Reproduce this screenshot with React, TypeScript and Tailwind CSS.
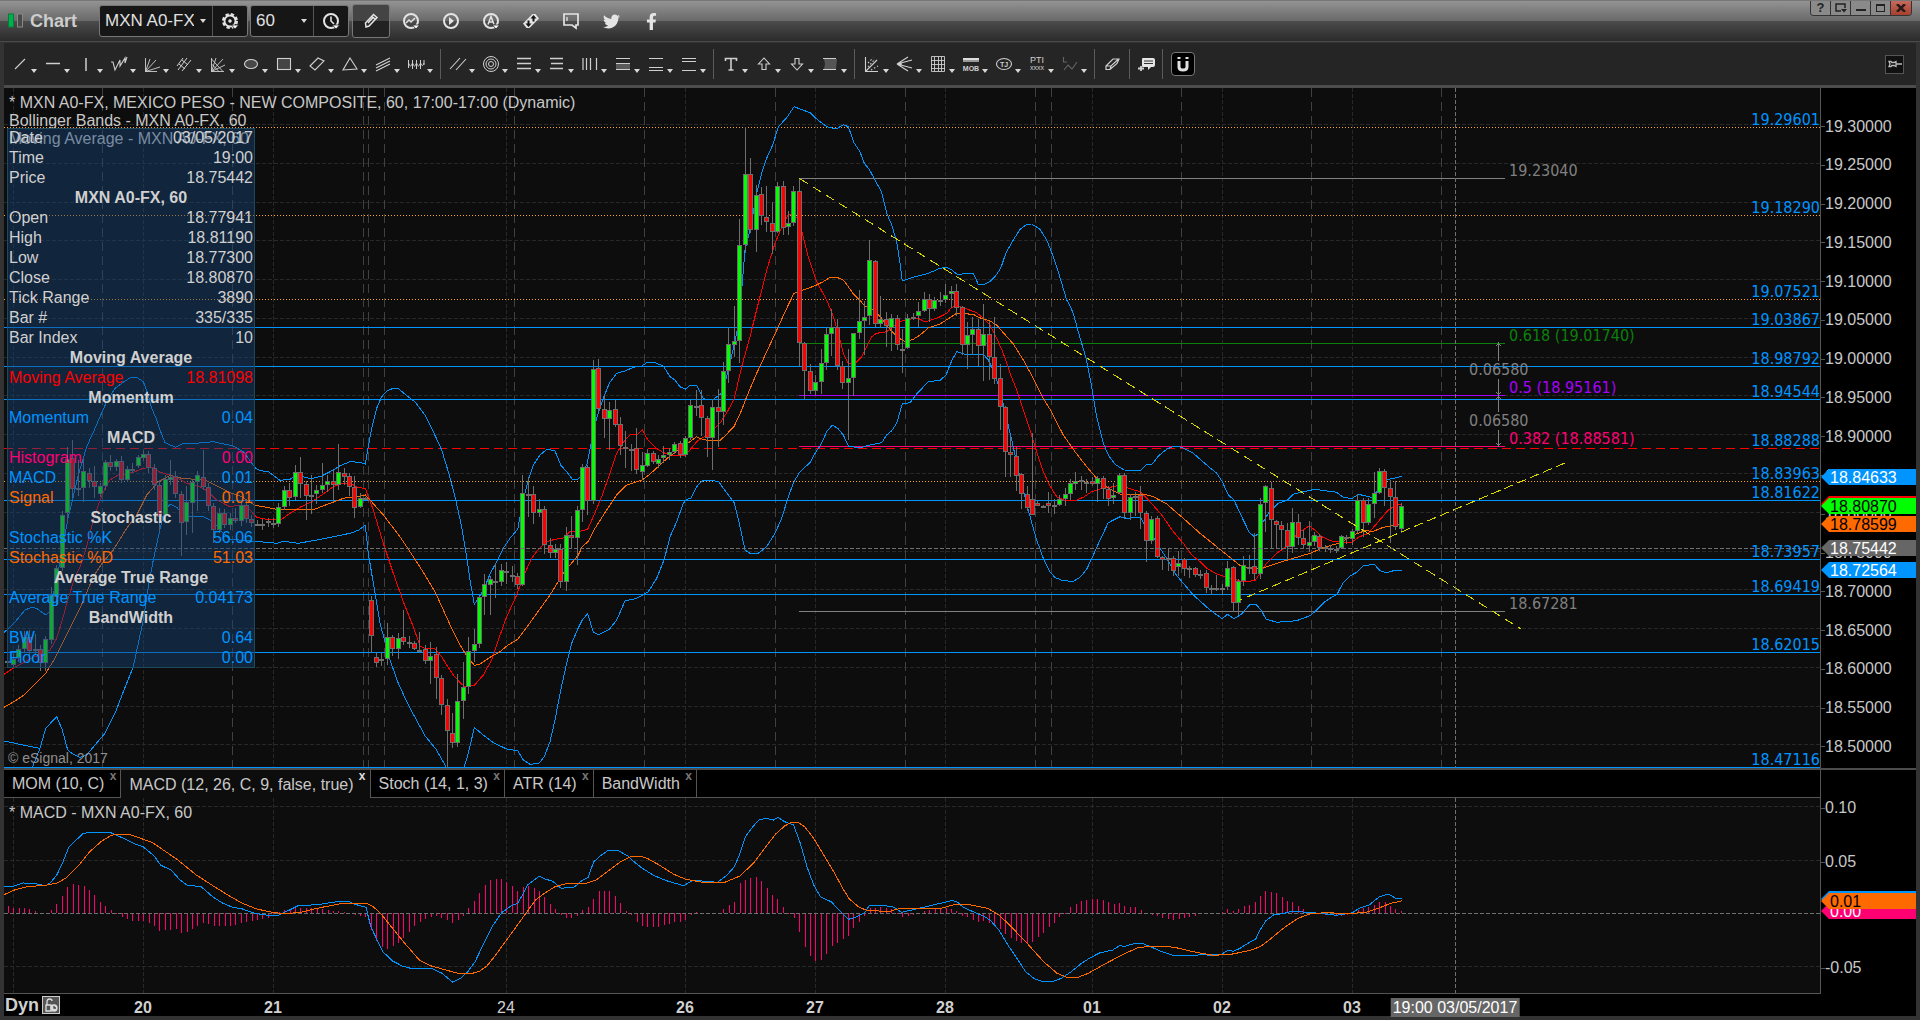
import React from 'react';
import { FaTwitter, FaFacebookF } from 'react-icons/fa';

type Point = [number, number];

type Chunk = { ox: number; oy: number; sx?: number; data: string };

const PLOT = { x: 4, y: 88, w: 1816, h: 680 };
const MACD = { x: 4, y: 798, w: 1816, h: 196 };
const BAR_STEP = 1030 / 190;

const priceY = (price: number) => 124.5 + (19.3 - price) * 775.6;

const toPoints = (chunks: Chunk[]): Point[] =>
  chunks.flatMap(({ ox, oy, sx = 3, data }) =>
    data.trim().split(/\s+/).map((pair): Point => {
      const [x, y] = pair.split(',').map(Number);
      return [ox + x / sx, oy + y / 3];
    })
  );

const toPolyline = (chunks: Chunk[]) =>
  toPoints(chunks).map(([x, y]) => `${x.toFixed(1)},${y.toFixed(1)}`).join(' ');

const upperBand: Chunk[] = [
  { ox: 0, oy: 420, data: '12,637 30,622 50,600 75,570 95,562 110,565 137,585 148,575 165,500 185,400 205,290 215,250 235,165 260,80 283,30 300,-10 320,-55 345,-95 375,-117 395,-129 412,-127 430,-115 445,-75 455,-35 470,0 480,30 495,68 527,82 550,70 575,71 640,65 700,78 730,95 745,115 765,143 780,152 805,155 840,181 870,178 890,165 915,172 935,176 965,168 1000,150 1020,137' },
  { ox: 350, oy: 340, data: '0,365 30,367 46,372 55,320 65,265 80,205 95,170 110,153 130,145 147,147 170,167 195,185 225,225 250,275 275,330 295,395 315,470 335,560 350,650 360,720 373,793 388,770 403,745 421,700 440,665 460,625 480,595 503,568 520,480 535,420 550,375 570,345 592,327 615,333 632,375 650,395 667,418 683,418 697,405 712,370 725,300 740,235 760,175 778,130 800,100 825,93 850,82 875,78 890,68 915,68 940,78 960,110 975,120 990,140 1006,148 1020,136 1040,137' },
  { ox: 700, oy: 90, data: '10,925 20,930 40,928 62,912 75,880 90,820 110,730 125,600 135,480 150,420 170,310 185,250 200,205 218,165 235,110 260,83 282,50 330,68 350,87 380,110 400,115 413,114 430,104 445,110 462,158 480,185 493,220 508,238 525,270 545,307 560,370 575,405 590,455 600,520 607,573 640,562 685,550 720,535 740,532 755,540 772,553 820,550 835,583 852,583 870,575 885,560 902,535 918,488 940,450 960,418 980,403 995,402 1020,418 1040,450 1055,488 1070,530 1085,580 1100,630' },
  { ox: 1050, oy: 300, data: '52,0 70,40 85,95 108,175 125,260 140,350 160,430 175,465 195,493 222,510 272,511 290,493 307,492 325,468 350,448 372,438 395,442 430,460 470,495 500,520 517,545 535,585 552,600 575,650 598,697 612,709 625,702 640,665 655,640 685,610 712,600 730,583 760,575 795,568 860,577 880,592 905,596 925,583 965,592 985,570 1000,545 1015,538 1035,534 1055,529' },
];

const lowerBand: Chunk[] = [
  { ox: 0, oy: 420, data: '97,1043 120,985 137,925 170,890 187,930 203,990 220,1003 240,1012 260,1005 285,975 315,940 345,880 370,815 400,740 415,670 430,600 445,500 460,420 475,350 490,285 510,252 530,262 545,280 565,290 610,290 640,305 660,330 690,358 765,364 830,370 850,364 895,370 950,360 1000,350' },
  { ox: 350, oy: 340, data: '0,580 25,571 46,556 55,640 75,760 90,850 105,905 120,960 145,1030 175,1095 225,1187 258,1228 288,1280 310,1320 335,1320 343,1280 355,1240 373,1163 400,1185 430,1208 470,1227 503,1232 520,1260 540,1273 567,1270 583,1250 600,1205 615,1140 632,1050 650,970 665,910 682,870 697,840 713,821 730,877 745,884 778,868 800,840 825,783 860,775 895,755 920,715 943,658 960,590 980,545 1000,490 1010,478 1022,475 1040,440' },
  { ox: 700, oy: 90, data: '5,1174 15,1170 55,1174 85,1215 103,1238 118,1300 135,1380 150,1390 175,1390 200,1370 225,1330 245,1285 265,1220 282,1175 300,1145 330,1118 348,1085 362,1065 380,1025 397,1005 413,1015 430,1035 445,1068 478,1074 510,1065 545,1058 560,1035 575,1022 590,1000 607,942 630,938 650,912 685,875 720,871 738,855 755,812 770,785 800,795 850,793 865,810 880,840 900,900 915,965 935,1050 955,1140 970,1200 985,1260' },
  { ox: 1050, oy: 300, data: '-57,660 -40,720 -20,775 0,815 15,833 40,842 70,844 90,832 110,808 130,765 150,720 175,668 210,650 230,655 272,652 290,690 310,710 330,745 350,775 375,820 400,850 430,885 480,930 517,956 532,943 552,956 575,942 598,915 618,913 633,930 648,957 680,967 740,962 780,947 800,930 825,905 845,892 862,882 878,850 900,828 922,816 940,797 973,793 990,812 1010,818 1035,811 1055,811' },
];

const fastAverage: Chunk[] = [
  { ox: 0, oy: 420, data: '12,763 40,745 75,725 100,712 120,705 150,690 170,655 187,600 203,540 222,480 240,440 260,380 280,300 300,240 315,205 330,180 355,165 375,163 400,157 430,145 460,142 480,157 510,165 540,178 560,190 600,200 625,215 650,240 690,260 720,255 745,265 770,292 800,298 845,298 870,280 900,262 935,245 970,222 1000,200 1030,190 1055,192 1075,203' },
  { ox: 350, oy: 340, data: '46,445 70,510 100,610 130,700 160,785 190,860 210,918 225,926 255,927 275,950 290,975 310,1005 330,1028 345,1040 373,1036 400,1005 425,960 445,900 470,830 500,765 520,710 545,655 565,628 590,605 615,598 640,594 660,575 685,575 713,568 730,530 755,470 780,400 800,340 825,300 840,285 865,282 877,270 890,295 915,322 940,338 965,345 1000,348 1020,330 1040,305' },
  { ox: 700, oy: 90, data: '0,1048 30,1030 60,1000 85,960 103,925 125,830 150,740 175,640 200,540 225,460 250,400 265,375 282,372 295,390 307,430 325,500 350,575 380,630 400,680 415,730 430,790 445,820 465,820 485,800 500,770 515,740 530,730 560,725 580,710 600,695 625,688 655,685 675,696 715,683 740,670 755,652 770,647 800,657 830,668 850,685 870,705 890,745 910,790 930,850 950,900 970,960 990,1020 1010,1085 1030,1145' },
  { ox: 1050, oy: 300, data: '0,558 20,590 45,602 75,602 100,592 125,575 150,567 190,560 205,556 240,566 270,575 300,605 335,645 370,695 400,730 425,765 450,785 470,805 500,822 525,830 555,838 575,845 615,842 630,820 650,790 680,760 712,738 730,715 750,695 778,678 795,690 815,710 850,725 905,727 925,712 955,700 985,665 1015,630 1035,618 1055,612' },
];

const slowAverage: Chunk[] = [
  { ox: 0, oy: 420, data: '12,862 45,843 75,823 100,798 137,760 165,715 200,645 240,565 280,470 310,425 340,390 380,325 410,285 440,225 475,185 510,166 545,175 615,180 650,198 690,218 725,230 765,256 800,262 840,270 895,267 945,267 990,250 1030,235' },
  { ox: 350, oy: 340, data: '0,472 20,470 46,465 60,480 100,525 150,590 190,650 225,705 255,755 280,810 305,865 325,905 345,940 373,976 390,972 420,952 450,935 470,918 503,898 540,848 600,765 640,700 685,645 697,620 715,604 735,565 770,510 800,465 830,435 877,420 900,402 930,375 955,352 975,338 1000,320 1020,305 1040,290' },
  { ox: 700, oy: 90, data: '0,1045 20,1051 60,1051 75,1038 103,1008 125,960 140,920 170,850 200,785 235,710 260,655 282,610 310,600 345,587 370,575 390,562 410,562 430,570 445,590 460,612 475,626 495,648 520,660 545,685 565,712 590,740 615,755 640,748 660,735 685,714 720,702 750,683 770,670 820,673 835,682 870,693 890,705 910,728 940,762 970,810 1000,865 1030,925' },
  { ox: 1050, oy: 300, data: '0,328 40,405 75,455 110,500 142,537 175,565 210,582 280,582 310,590 350,612 400,655 450,700 500,740 550,780 575,800 612,808 640,804 680,790 730,775 780,760 820,743 870,728 910,705 945,692 970,694 1000,682 1030,676 1055,670' },
];

// g = up, r = down, d = unchanged; then x, high, body top, body bottom, low
const candleChunks: Chunk[] = [
  { ox: 0, oy: 420, data: `d22,715,725,725,745 g40,700,717,732,742 g55,675,687,712,728 g73,635,653,685,700 r88,630,651,691,710
    d106,642,688,688,705 r121,675,688,727,755 g136,650,657,727,755 g154,503,525,657,672 g169,435,445,530,560 g187,275,287,443,455
    g202,83,118,277,310 r217,60,115,206,235 d235,122,206,206,228 g250,115,154,203,247 r268,145,160,182,205 r283,140,184,199,235
    g300,190,199,220,232 g316,120,128,196,210 r331,105,128,140,155 g349,118,125,140,155 r364,110,124,178,190 g382,140,148,178,188
    d397,130,148,148,160 g415,105,112,136,145 g430,90,103,112,125 r445,95,102,142,160 r463,133,145,193,210 r478,180,196,290,335
    g496,165,178,284,305 g511,122,172,176,195 r526,155,170,220,235 r544,215,223,306,410 g559,200,247,304,345 g577,180,187,247,340
    g592,155,166,185,275 r610,92,172,200,210 r625,190,202,257,275 r640,250,259,328,370 g658,265,280,328,340 r673,268,280,312,325
    g691,280,295,312,330 r706,265,295,301,310 g724,245,256,302,320 r739,240,256,295,310 r754,285,298,307,322 d772,300,312,312,320
    d787,298,312,312,332 d805,295,304,304,322 d820,295,311,311,325 g835,250,262,310,322 g853,200,211,259,270 r868,190,211,232,258
    g886,137,157,229,240 r901,113,157,190,235 r919,185,192,226,302 d935,165,227,227,282 g949,195,211,221,252 g967,130,196,208,220
    g982,165,184,193,218 r1000,150,184,192,247 g1015,72,157,192,212 r1033,145,160,170,195 r1048,160,169,200,230
    r1063,170,202,262,295 g1081,220,235,260,265 d1096,232,234,234,236` },
  { ox: 350, oy: 340, data: `r64,770,781,886,940 r79,940,952,967,983 d94,938,957,957,980 g112,850,892,955,977 r127,885,892,925,950
    g145,880,895,925,957 r160,810,892,905,915 d178,888,908,908,925 r193,903,910,925,932 d208,877,930,930,935 r226,915,928,961,972
    g241,907,949,961,1033 r259,922,943,1012,1077 r274,1007,1015,1093,1125 r292,1077,1096,1171,1285 r307,1119,1180,1207,1225
    g322,1003,1084,1207,1222 g340,967,1042,1081,1137 g355,892,934,1039,1062 g373,868,913,931,967 g388,768,772,911,925
    g403,702,733,769,825 g421,710,718,733,825 d436,670,723,723,775 g454,673,691,724,740 d469,668,693,693,732 d487,680,705,705,727
    r502,700,709,734,748 g517,405,460,734,738 d535,412,462,462,532 r550,438,463,517,552 g568,478,508,517,532 r583,500,508,613,642
    r601,595,616,637,655 g616,612,628,637,655 r631,612,628,724,745 g649,562,586,724,755 r664,530,586,592,625 g682,500,511,592,675
    g697,372,382,508,547 r712,375,382,481,525 g730,60,88,481,492 r745,57,85,205,217 r763,165,208,235,295 g778,188,211,235,332
    r796,182,208,253,262 r811,232,253,316,345 d826,275,321,321,385 d844,312,327,327,393 r859,264,325,388,402 g877,338,376,395,420
    g892,327,340,376,382 r910,333,340,364,372 g925,345,358,370,385 g940,318,346,352,370 g958,325,337,343,360 g973,306,313,334,342
    r991,305,310,343,355 g1006,288,295,343,352 g1021,180,196,292,300 d1039,152,198,198,230 r1054,150,196,232,290
    r1072,230,235,292,353 g1087,177,202,292,392 r1105,148,202,214,323 g1120,67,94,214,255` },
  { ox: 700, oy: 90, data: `g85,712,763,842,880 g103,648,754,763,802 g118,388,466,752,820 g136,112,253,463,490 r151,204,253,418,430
    g169,285,316,418,487 r184,292,313,376,405 r199,288,382,395,427 r217,337,400,424,492 g232,276,289,424,430 r250,273,289,412,437
    g265,363,400,409,437 g280,288,304,397,410 r298,264,304,757,828 r313,756,760,842,928 r331,822,844,902,912 g346,857,877,901,915
    g364,777,820,875,912 g379,715,733,817,840 g394,657,712,730,800 r412,687,712,827,842 r427,813,829,878,897 g445,777,865,878,1050
    g460,730,730,862,920 g478,600,694,728,748 g493,633,682,692,795 g508,450,511,677,705 r526,510,514,700,712 g541,618,688,700,715
    r559,667,688,707,773 g574,672,685,712,785 r592,675,685,763,780 d607,718,777,777,850 g622,672,685,773,777 d640,670,681,681,692
    g655,637,664,676,712 g673,608,628,661,667 r688,613,628,656,697 g703,622,631,655,665 d721,608,632,632,650 g736,582,616,628,640
    g754,588,604,611,655 r769,582,604,653,680 r787,648,652,763,797 g802,697,736,763,837 g817,682,718,733,795 r835,687,718,766,828
    g850,642,733,766,875 r868,693,733,799,870 r883,682,802,865,883 r901,822,865,949,1020 r916,948,952,1084,1163
    r931,1043,1087,1093,1163 r949,1072,1099,1157,1203 r964,1150,1153,1210,1258 r982,1190,1213,1252,1265 r997,1030,1228,1273,1275
    r1012,1235,1240,1246,1250 d1030,1245,1248,1248,1251 r1045,1207,1240,1246,1270 d1063,1228,1246,1246,1272
    g1078,1215,1228,1243,1250 g1096,1195,1213,1225,1250 g1111,1168,1180,1210,1230 g1126,1147,1174,1180,1200
    d1144,1160,1172,1172,1200 d1159,1167,1176,1176,1210 r1177,1162,1174,1180,1190` },
  { ox: 1050, oy: 300, data: `g142,530,535,550,607 r160,530,535,565,597 r175,560,568,596,620 g190,550,586,592,613 g208,520,526,577,583
    r223,520,526,637,658 g241,582,592,637,660 d256,578,588,588,650 r271,558,586,637,687 r289,635,640,721,787 g304,650,658,721,733
    r322,650,655,769,775 r337,768,772,778,812 d355,745,775,775,815 r370,768,775,811,828 g385,755,790,799,828 r403,775,778,805,830
    d418,800,806,806,835 r436,802,805,823,833 d451,812,822,822,838 r469,812,820,862,880 d484,855,864,864,885 d499,825,864,864,875
    d517,852,864,864,885 g532,785,805,859,870 r550,798,802,907,937 g565,838,844,907,945 g580,770,796,841,860 d598,765,801,801,822
    r613,700,799,820,840 g631,595,613,820,838 g646,555,559,607,697 r664,547,565,658,745 r679,660,664,674,745 r694,665,676,688,752
    r712,670,691,739,780 g727,625,667,739,760 r745,643,667,712,737 r760,690,715,733,745 g778,663,727,737,757 g793,697,706,724,738
    r808,703,709,742,755 d826,735,743,743,757 d841,735,744,744,760 d859,740,748,748,760 g874,705,709,743,748 d889,707,713,713,733
    g907,688,694,716,735 g922,583,601,691,700 r940,595,601,667,712 g955,595,613,667,675 g973,517,580,610,655 g988,505,514,577,583
    r1003,507,514,562,620 r1021,540,565,590,730 r1036,545,592,679,690 g1054,609,619,685,700` },
];

const candles = candleChunks.flatMap(({ ox, oy, data }) =>
  data.trim().split(/\s+/).map((token) => {
    const [x, high, top, bottom, low] = token.slice(1).split(',').map(Number);
    const py = (v: number) => oy + Math.floor(v / 3);
    return { kind: token[0], x: ox + Math.floor(x / 3), high: py(high), top: py(top), bottom: py(bottom), low: py(low) };
  })
);

const macdLine: Chunk[] = [
  { ox: 0, oy: 760, sx: 2.063, data: '8,380 27,379 48,369 70,370 95,378 105,367 118,343 130,305 142,262 155,243 172,220 190,217 230,219 250,232 275,250 295,260 318,288 332,316 353,330 370,358 385,375 415,380 440,412 460,430 480,442 500,447 525,460 545,464 560,467 575,465 590,455 615,437 655,434 700,424 720,425 735,434 755,442 765,500 778,540 790,575 810,603 830,618 850,626 892,626 912,640 934,667 950,655 965,635 980,605 1000,545 1015,500 1035,458 1055,437 1068,430 1078,405 1088,375 1112,349 1125,357 1140,364 1158,385 1185,381 1200,362 1213,353 1225,305 1240,286 1255,271 1275,271 1295,288 1308,305 1325,325 1350,347 1375,362 1410,377 1430,361 1455,364 1480,367 1500,345 1515,320' },
  { ox: 740, oy: 800, sx: 2.24, data: '0,160 12,110 30,78 42,60 58,55 75,60 85,52 100,65 120,75 135,130 150,200 165,255 180,290 205,306 225,335 243,358 262,350 280,337 290,316 315,316 342,320 362,337 385,330 430,316 473,302 485,304 500,322 530,340 545,348 560,360 580,390 600,435 620,475 640,515 660,537 680,545 700,545 720,535 740,517 765,490 785,473 805,459 835,450 850,437 862,439 885,430 900,430 920,440 945,455 970,466 1025,466 1032,462 1050,466 1078,463 1095,450 1105,454 1120,445 1140,428 1155,418 1165,390 1178,362 1195,345 1220,340 1235,334 1260,336 1300,340 1335,346 1360,341 1372,338 1385,326 1410,314 1432,290 1452,282 1470,296 1483,296' },
];

const signalLine: Chunk[] = [
  { ox: 0, oy: 760, sx: 2.063, data: '8,404 30,390 55,380 95,376 120,368 135,355 160,320 185,275 210,243 230,226 245,222 265,223 290,235 315,248 340,273 365,298 405,345 440,378 470,405 500,430 530,447 565,458 590,461 620,457 660,443 700,432 725,430 757,430 770,440 785,460 810,505 835,550 865,600 890,618 925,632 945,640 975,640 990,633 1005,617 1020,590 1050,530 1070,490 1085,460 1105,420 1125,398 1145,380 1170,370 1210,370 1230,360 1255,333 1280,305 1300,291 1320,288 1335,295 1360,315 1390,343 1415,358 1450,367 1495,367 1520,352' },
  { ox: 740, oy: 800, sx: 2.24, data: '0,228 30,190 55,145 80,102 100,78 115,67 130,67 145,80 165,115 185,160 210,215 230,265 245,297 265,320 285,332 335,334 360,325 450,325 480,314 515,314 555,325 580,345 600,370 640,425 680,485 710,520 735,533 755,533 780,520 820,490 860,462 890,444 920,438 950,438 980,444 1010,454 1060,466 1100,463 1140,452 1165,440 1190,415 1220,382 1250,355 1280,340 1325,338 1345,341 1400,338 1430,325 1455,311 1483,302' },
];

const histogramOutline = toPoints([
  { ox: 0, oy: 760, sx: 2.063, data: '15,438 28,444 50,444 73,453 85,459 95,459 106,450 117,432 129,407 140,380 151,373 173,375 185,390 207,425 218,438 229,450 240,459 252,470 263,476 274,482 296,483 307,489 318,498 330,513 352,510 363,507 374,518 386,516 397,506 408,496 419,489 430,491 441,498 475,497 486,494 497,488 520,484 542,478 556,472 565,461 590,450 612,442 640,445 665,447 690,453 715,455 728,462 740,466 755,470 767,512 778,548 789,562 800,566 811,560 822,548 833,532 845,515 856,498 867,485 880,475 900,468 912,474 923,480 935,491 945,480 957,467 967,444 978,424 990,396 1001,376 1012,360 1023,357 1034,357 1045,366 1057,378 1068,393 1080,380 1090,378 1101,384 1112,392 1123,410 1135,430 1146,447 1157,463 1168,473 1180,473 1192,467 1202,448 1213,444 1224,418 1235,394 1257,393 1269,407 1280,430 1290,450 1302,464 1313,485 1324,497 1335,500 1357,500 1370,497 1380,491 1392,486 1410,485 1425,467 1437,457 1450,459 1480,460 1493,447 1503,435 1515,428' },
  { ox: 740, oy: 800, sx: 2.24, data: '0,250 12,240 24,234 37,231 48,243 60,262 72,284 84,297 97,321 110,340 120,347 133,395 145,437 158,467 170,483 182,480 195,461 206,440 218,430 230,420 243,407 255,383 268,366 280,347 290,325 315,321 340,327 352,337 364,350 376,348 400,340 412,333 437,326 465,323 485,332 498,347 522,358 535,366 548,363 560,370 572,378 584,387 596,405 607,412 618,422 632,429 644,429 656,426 668,413 680,399 692,383 704,369 716,350 730,338 740,321 752,312 765,304 777,300 800,297 813,300 838,312 850,309 862,318 890,322 900,330 912,340 935,347 948,356 970,359 982,357 1010,350 1022,347 1035,342 1068,341 1080,337 1092,327 1105,333 1117,328 1128,318 1152,312 1165,290 1177,273 1202,279 1214,289 1226,303 1238,306 1250,318 1262,327 1275,337 1300,343 1335,348 1360,345 1372,337 1384,330 1397,325 1420,316 1432,306 1445,306 1456,316 1468,328 1483,334' },
]);

const histogramAt = (x: number) => {
  const next = histogramOutline.findIndex((p) => p[0] >= x);
  if (next < 0) return histogramOutline[histogramOutline.length - 1][1];
  if (next === 0) return histogramOutline[0][1];
  const [x0, y0] = histogramOutline[next - 1];
  const [x1, y1] = histogramOutline[next];
  return y0 + ((y1 - y0) * (x - x0)) / (x1 - x0);
};

const histogram = Array.from({ length: 258 }, (_, i) => {
  const x = Math.floor(1401.4 - BAR_STEP * (257 - i));
  return { x, y: Math.round(histogramAt(x + 0.5)) };
});

const gridX = [13, 143, 273, 506, 685, 815, 945, 1092, 1222, 1352];
const sessionX = [102, 232, 363, 368, 384, 514, 644, 775, 905, 1035, 1051, 1181, 1311, 1441];
const CURSOR_X = 1455;
const CURSOR_Y = 548;

const priceTicks = Array.from({ length: 17 }, (_, i) => 19.3 - i * 0.05);
const macdTicks = [
  { label: '0.10', y: 806 },
  { label: '0.05', y: 860 },
  { label: '-0.05', y: 966 },
];

const levels = [
  { price: '19.29601', y: 127, style: 'dotted' },
  { price: '19.18290', y: 215, style: 'dotted' },
  { price: '19.07521', y: 299, style: 'dotted' },
  { price: '19.03867', y: 327, style: 'solid' },
  { price: '18.98792', y: 366, style: 'solid' },
  { price: '18.94544', y: 399, style: 'solid' },
  { price: '18.88288', y: 448, style: 'dashed' },
  { price: '18.83963', y: 481, style: 'dotted' },
  { price: '18.81622', y: 500, style: 'solid' },
  { price: '18.73957', y: 559, style: 'solid' },
  { price: '18.69419', y: 594, style: 'solid' },
  { price: '18.62015', y: 652, style: 'solid' },
  { price: '18.47116', y: 767, style: 'solid' },
];

const levelStroke: Record<string, { stroke: string; dash?: string }> = {
  dotted: { stroke: '#ffa526', dash: '1 2' },
  solid: { stroke: '#0094ff' },
  dashed: { stroke: '#ff0000', dash: '9 5' },
};

const retracements = [
  { label: '19.23040', y: 178, stroke: '#808080', text: 'text-[#808080]' },
  { label: '0.618 (19.01740)', y: 343, stroke: '#0c800c', text: 'text-[#0c800c]' },
  { label: '0.5 (18.95161)', y: 395, stroke: '#a800ff', text: 'text-[#a800ff]' },
  { label: '0.382 (18.88581)', y: 446, stroke: '#ff0073', text: 'text-[#ff0073]' },
  { label: '18.67281', y: 611, stroke: '#808080', text: 'text-[#808080]' },
];

const priceTags = [
  { label: '18.84633', y: 477, className: 'bg-[#0094ff] text-white' },
  { label: '18.81098', y: 504, className: 'bg-[#ff0000] text-black' },
  { label: '18.80870', y: 506, className: 'bg-[#00ff00] text-black' },
  { label: '18.78599', y: 524, className: 'bg-[#ff6a00] text-black' },
  { label: '18.75442', y: 548, className: 'bg-[#666] text-white' },
  { label: '18.72564', y: 570, className: 'bg-[#0094ff] text-white' },
];

const macdTags = [
  { label: '0.00', y: 911, className: 'bg-[#ff0073] text-white' },
  { label: '0.01', y: 899, className: 'bg-[#0094ff] text-white' },
  { label: '0.01', y: 901, className: 'bg-[#ff6a00] text-black' },
];

const dates = [
  { label: '20', x: 143, bold: true },
  { label: '21', x: 273, bold: true },
  { label: '24', x: 506, bold: false },
  { label: '26', x: 685, bold: true },
  { label: '27', x: 815, bold: true },
  { label: '28', x: 945, bold: true },
  { label: '01', x: 1092, bold: true },
  { label: '02', x: 1222, bold: true },
  { label: '03', x: 1352, bold: true },
];

const tabs = [
  { label: 'MOM (10, C)', active: false },
  { label: 'MACD (12, 26, C, 9, false, true)', active: true },
  { label: 'Stoch (14, 1, 3)', active: false },
  { label: 'ATR (14)', active: false },
  { label: 'BandWidth', active: false },
];

type DataRow = { name: string; value?: string; color?: string };

const BLUE = 'text-[#0094ff]';
const ORANGE = 'text-[#ff6a00]';

const dataRows: DataRow[] = [
  { name: 'Date', value: '03/05/2017' },
  { name: 'Time', value: '19:00' },
  { name: 'Price', value: '18.75442' },
  { name: 'MXN A0-FX, 60' },
  { name: 'Open', value: '18.77941' },
  { name: 'High', value: '18.81190' },
  { name: 'Low', value: '18.77300' },
  { name: 'Close', value: '18.80870' },
  { name: 'Tick Range', value: '3890' },
  { name: 'Bar #', value: '335/335' },
  { name: 'Bar Index', value: '10' },
  { name: 'Moving Average' },
  { name: 'Moving Average', value: '18.81098', color: 'text-[#ff0000]' },
  { name: 'Momentum' },
  { name: 'Momentum', value: '0.04', color: BLUE },
  { name: 'MACD' },
  { name: 'Histogram', value: '0.00', color: 'text-[#ff0073]' },
  { name: 'MACD', value: '0.01', color: BLUE },
  { name: 'Signal', value: '0.01', color: ORANGE },
  { name: 'Stochastic' },
  { name: 'Stochastic %K', value: '56.06', color: BLUE },
  { name: 'Stochastic %D', value: '51.03', color: ORANGE },
  { name: 'Average True Range' },
  { name: 'Average True Range', value: '0.04173', color: BLUE },
  { name: 'BandWidth' },
  { name: 'BW', value: '0.64', color: BLUE },
  { name: 'Floor', value: '0.00', color: BLUE },
];

const pctX = (x: number) => `${((x - PLOT.x) / PLOT.w) * 100}%`;
const pctY = (y: number, box = PLOT) => `${((y - box.y) / box.h) * 100}%`;

/* ---------- icons ---------- */

const Icon: React.FC<{ children: React.ReactNode }> = ({ children }) => (
  <svg viewBox="0 0 18 18" className="size-[18px] shrink-0" fill="none" stroke="currentColor" strokeWidth="1.1" aria-hidden="true">
    {children}
  </svg>
);

const Caret = () => (
  <svg viewBox="0 0 6 4" className="h-1 w-1.5 shrink-0" fill="#d8d8d8" aria-hidden="true">
    <path d="M0 0h6L3 4z" />
  </svg>
);

const iconCaret = <path d="M10.5 13h7l-3.500 4z" fill="#fff" stroke="#2a2a2a" strokeWidth="0.8" />;

const lineGroups: { name: string; icon: React.ReactNode }[][] = [
  [
    { name: 'Trend line', icon: <path d="M4 14 14 4" /> },
    { name: 'Horizontal line', icon: <path d="M2 8.500h14" strokeWidth="1.500" /> },
    { name: 'Vertical line', icon: <path d="M9 3v13" strokeWidth="1.500" /> },
    { name: 'Zigzag', icon: <path d="M1 7h2l2 8 5-10v6l5-8v5l2-6" /> },
    { name: 'Speed lines', icon: <path d="M2.500 3v13.500M2.500 16.500 7 4M2.500 16.500 13 5M2.500 16.500 17 12M2.500 16.500H14" strokeWidth="0.900" /> },
    { name: 'Pitchfork', icon: <path d="M2 15 11 3M6 16 15 5M1 11 7 3M3 9l6 5M6 5l6 5" strokeWidth="1" /> },
    { name: 'Gann fan', icon: <path d="M2.500 3v13.500H15M2.500 16.500 7 3M2.500 16.500 14 4M2.500 16.500 16 10M2.500 4l11 12M2.500 9l7 7" strokeWidth="0.900" /> },
    { name: 'Ellipse', icon: <ellipse cx="9" cy="9" rx="6.500" ry="4.500" fill="#484848" /> },
    { name: 'Rectangle', icon: <rect x="2.500" y="3.500" width="13" height="11" fill="#454545" /> },
    { name: 'Parallelogram', icon: <path d="m2 11 8-8 6 3-9 9z" /> },
    { name: 'Triangle', icon: <path d="M9 3 2 15l14-1z" /> },
    { name: 'Regression', icon: <path d="m2 10 14-7M2 13l14-7M2 16l14-7" /> },
    { name: 'Cycles', icon: <path d="M1.500 5v8M5.500 5v9M9.500 5v9M13.500 5v9M17 5v5M1.500 8q2 6 4 0q2 6 4 0q2 6 4 0q2 5 3.500 0" strokeWidth="1" /> },
  ],
  [
    { name: 'Parallel lines', icon: <path d="M1 14 11 3M7 15 17 4" /> },
    { name: 'Fibonacci circles', icon: <><circle cx="9" cy="9" r="7.500" strokeWidth="1" /><circle cx="9" cy="9" r="5" strokeWidth="1" /><circle cx="9" cy="9" r="2.500" strokeWidth="1" /></> },
    { name: 'Fibonacci retracement', icon: <path d="M2 3.500h14M2 8.500h14M2 13.500h14" strokeWidth="1.500" /> },
    { name: 'Fibonacci extension', icon: <path d="M2 3.500h13M3 8.500h12M2 13.500h13" strokeWidth="1.500" /> },
    { name: 'Fibonacci time', icon: <path d="M2 3v12M5.500 3v12M9.500 3v12M15.500 3v12" strokeWidth="1.200" /> },
    { name: 'Fibonacci zone', icon: <><path d="M2 9h14v5H2z" fill="#5a5a5a" stroke="none" /><path d="M2 3.500h14M2 8.500h14M2 14.500h14" /></> },
    { name: 'Fibonacci channel', icon: <path d="M2 3.500h14M2 12.500h14M2 15.500h14" /> },
    { name: 'Price channel', icon: <path d="M2 3.500h14M2 6.500h14M2 15.500h14" /> },
  ],
  [
    { name: 'Text', icon: <path d="M3.500 6V3.500h11V6M9 3.500V15M6.500 15h5" strokeWidth="1.600" /> },
    { name: 'Up arrow', icon: <path d="M9 3 3.500 9H7v5.500h4V9h3.500z" /> },
    { name: 'Down arrow', icon: <path d="M9 15 3.500 9H7V3.500h4V9h3.500z" /> },
    { name: 'Range', icon: <><path d="M3 4h13l-1 10H3l1-5z" fill="#555" stroke="none" /><path d="M2 3.500h13M2 14.500h13" /></> },
  ],
  [
    { name: 'Scatter', icon: <><path d="M2.500 2v14.500H15M2.500 16.500 14 5" /><path d="M5 8l5-5M8 15l7-4M5 12l7-8" strokeDasharray="1.500 2" /></> },
    { name: 'Fan', icon: <path d="M1 9 12 2M1 9l15-4M1 9h5M1 9l15 4M1 9l11 7" strokeWidth="1.100" /> },
    { name: 'Grid', icon: <path d="M2.500 1.500h13v15h-13zM5.500 2v14M9.500 2v14M12.500 2v14M2 5.500h14M2 9.500h14M2 13.500h14" strokeWidth="0.900" /> },
    { name: 'MOB', icon: <><path d="M1 3h16v2H1z" fill="#ddd" stroke="none" /><path d="M1 5h16v2H1z" fill="#999" stroke="none" /><text x="9" y="16" textAnchor="middle" fontSize="7" fontWeight="bold" fill="currentColor" stroke="none">MOB</text></> },
    { name: 'TJ', icon: <><ellipse cx="9" cy="9" rx="7.500" ry="5.500" /><text x="9" y="12" textAnchor="middle" fontSize="7" fontWeight="bold" fill="currentColor" stroke="none">TJ</text></> },
    { name: 'PTI', icon: <><text x="9" y="8" textAnchor="middle" fontSize="9" fill="currentColor" stroke="none">PTI</text><text x="9" y="15" textAnchor="middle" fontSize="7" fill="currentColor" stroke="none">xxxx</text></> },
    { name: 'Labels', icon: <path d="M2.500 2v5H6M3 15l4-5 4 4 5-7" stroke="#666" /> },
  ],
];

const titleIcons: { name: string; icon: React.ReactNode }[] = [
  { name: 'Studies', icon: <Icon><circle cx="9" cy="9" r="7" strokeWidth="2" /><path d="m4 11 3-3 2 2 4-4" strokeWidth="1.500" />{iconCaret}</Icon> },
  { name: 'Replay', icon: <Icon><circle cx="9" cy="9" r="7" strokeWidth="2" /><path d="m7 5 5 4-5 4z" fill="currentColor" stroke="none" /></Icon> },
  { name: 'Alerts', icon: <Icon><circle cx="9" cy="9" r="7" strokeWidth="2" /><path d="m6 12.500 3-8 3 8M7 10h4" strokeWidth="1.500" />{iconCaret}</Icon> },
  { name: 'Link', icon: <Icon><path d="M1 11.500 10.500 2h3L17 6.500 7.500 16h-3z" fill="currentColor" stroke="none" /><path d="M11.500 3 14.500 6.500h-2V9.500h-2V6.500h-2zM6.500 15 3.500 11.500h2V8.500h2v3h2z" fill="#151515" stroke="none" /></Icon> },
  { name: 'Comment', icon: <Icon><path d="M2 2h14v11h-2v3l-4-3H2z" strokeWidth="1.700" /><path d="M5 5v4" strokeWidth="1.300" /></Icon> },
  { name: 'Twitter', icon: <FaTwitter size={17} /> },
  { name: 'Facebook', icon: <FaFacebookF size={17} /> },
];

/* ---------- window chrome ---------- */

const TitleBar = () => (
  <header className="relative flex h-[42px] items-center border-y border-t-[#777] border-b-[#4a4a4a] bg-[linear-gradient(#939393_0%,#696969_50%,#4c4c4c_50%,#2b2b2b_100%)] pl-2 text-[#e4e4e4]">
    <svg viewBox="0 0 16 16" className="size-4" aria-hidden="true">
      <rect x="0.500" y="1" width="5" height="13" fill="#00b050" stroke="#0a7a3a" />
      <rect x="9.500" y="1" width="5" height="13" fill="#4a4a4a" stroke="#888" />
    </svg>
    <h1 className="ml-1.5 w-[69px] text-[18px] font-bold text-[#cdcdcd]">Chart</h1>

    <div className="flex h-8 w-[149px] items-center rounded-[3px] border border-[#777] bg-[#161616]">
      <input aria-label="Symbol" defaultValue="MXN A0-FX" className="h-full w-[94px] bg-transparent pl-[5px] text-[17px] text-[#e0e0e0] outline-none" />
      <button aria-label="Symbol list" className="flex h-full w-[18px] items-center justify-center"><Caret /></button>
      <button aria-label="Symbol settings" className="flex h-full grow items-center justify-center border-l border-[#555]">
        <Icon><circle cx="9" cy="9" r="6.500" strokeWidth="3" strokeDasharray="3.100 2" /><circle cx="9" cy="9" r="5.500" strokeWidth="1.800" /><circle cx="9" cy="9" r="1.200" fill="currentColor" />{iconCaret}</Icon>
      </button>
    </div>

    <div className="relative ml-0.5 flex h-8 w-[99px] items-center rounded-[3px] border border-[#777] bg-[#161616]">
      <select aria-label="Interval" className="h-full w-[62px] appearance-none bg-transparent pl-[5px] text-[17px] text-[#e0e0e0] outline-none">
        <option>60</option>
      </select>
      <span className="pointer-events-none absolute left-[50px]"><Caret /></span>
      <button aria-label="Time template" className="flex h-full grow items-center justify-center border-l border-[#555]">
        <Icon><circle cx="9" cy="9" r="7" strokeWidth="2" /><path d="M9 4.500V9l3 3" strokeWidth="1.600" />{iconCaret}</Icon>
      </button>
    </div>

    <button aria-label="Drawing tools" className="ml-[3px] flex h-[34px] w-[38px] items-center justify-center rounded-[3px] border border-[#777] bg-[linear-gradient(#444_50%,#222_50%)]">
      <Icon><path d="M4 15 3.500 11 11.500 2.500l3.500 3L7 14zM10 4.500l3.500 3M6 11l5-5.500" strokeWidth="1.500" /></Icon>
    </button>
    <div className="ml-px flex">
      {titleIcons.map(({ name, icon }) => (
        <button key={name} aria-label={name} className="flex w-10 items-center justify-center">{icon}</button>
      ))}
    </div>

    <div className="mr-2 ml-auto flex h-[15px] self-start overflow-hidden rounded-b border border-t-0 border-[#333] text-[#222]">
      <button aria-label="Help" className="w-5 border-r border-[#333] bg-[#8a8a8a] text-[13px] leading-[14px] font-bold">?</button>
      <button aria-label="Window menu" className="flex w-5 items-center justify-center border-r border-[#333] bg-[#8a8a8a]">
        <svg viewBox="0 0 12 10" className="h-2.5 w-3" fill="none" stroke="currentColor" strokeWidth="1.500"><path d="M6 8H1V1h9v4" /><path d="M6 6h6L9 9.500z" fill="currentColor" stroke="none" /></svg>
      </button>
      <button aria-label="Minimize" className="flex w-5 items-end justify-center border-r border-[#333] bg-[#8a8a8a] pb-1"><span className="h-0.5 w-2.5 bg-[#222]" /></button>
      <button aria-label="Maximize" className="flex w-5 items-center justify-center border-r border-[#333] bg-[#8a8a8a]"><span className="h-2 w-[9px] border border-t-2 border-[#222]" /></button>
      <button aria-label="Close" className="flex w-5 items-center justify-center bg-[linear-gradient(#c46a5c,#a8402f)]">
        <svg viewBox="0 0 10 8" className="h-2 w-2.5" stroke="#2a1a1a" strokeWidth="2.500"><path d="m1 0 8 8M9 0 1 8" /></svg>
      </button>
    </div>
  </header>
);

const Separator = () => <span className="mr-2 h-[30px] w-px shrink-0 bg-[#5a5a5a]" />;

const DrawingToolbar = () => (
  <nav className="flex h-[43px] items-center border-t border-[#333] bg-[#252525] pr-3 pl-[7px] text-[#cfcfcf]">
    {lineGroups.map((group, i) => (
      <React.Fragment key={i}>
        {group.map(({ name, icon }) => (
          <button key={name} aria-label={name} className="flex w-[33px] shrink-0 items-end gap-0.5">
            <Icon>{icon}</Icon>
            <Caret />
          </button>
        ))}
        <Separator />
      </React.Fragment>
    ))}
    <button aria-label="Erase" className="mr-2"><Icon><path d="M3 11 10 4h6l-2 4.500-7 6H3zM3 11h5l7-6.500M8 11l-1 3.500" strokeWidth="1.200" /></Icon></button>
    <Separator />
    <button aria-label="Add note" className="mr-1.5">
      <Icon><path d="M5 3h10q2 0 2 2v5q0 2-2 2h-2l-3 3v-3H5q-1 0-1-1V4q0-1 1-1z" fill="#e6e6e6" stroke="none" /><path d="M6 6h9M6 8.500h9" stroke="#333" /><path d="M0 13.500h6M3 11v5" strokeWidth="1.800" /></Icon>
    </button>
    <Separator />
    <button aria-label="Magnet" className="flex size-6 items-center justify-center rounded border border-[#777] bg-black">
      <Icon><path d="M5 6v6q0 3 4 3t4-3V6" strokeWidth="3" stroke="#e0e0e0" /><path d="M3.500 3h3M11.500 3h3" strokeWidth="2" stroke="#e0e0e0" /></Icon>
    </button>
    <button aria-label="Pin toolbar" className="ml-auto flex size-[19px] items-center justify-center border border-[#555] bg-[#111]">
      <svg viewBox="0 0 14 8" className="h-2 w-3.5" fill="none" stroke="#bbb" strokeWidth="1.300"><path d="M1 1.500h2l1 1h2l2-1v5l-2-1H4l-1 1H1L2 4zM8 4h6" /></svg>
    </button>
  </nav>
);

/* ---------- price pane ---------- */

const PriceChart = () => (
  <svg viewBox="4 88 1816 680" preserveAspectRatio="none" className="absolute inset-0 size-full" shapeRendering="crispEdges" fill="none" role="img" aria-label="Price chart">
    <g stroke="#282828" strokeDasharray="4 2">
      {priceTicks.map((p) => (
        <line key={p} x1={4} x2={1820} y1={Math.floor(priceY(p)) + 0.5} y2={Math.floor(priceY(p)) + 0.5} />
      ))}
      {gridX.map((x) => <line key={x} x1={x + 0.5} x2={x + 0.5} y1={88} y2={768} />)}
    </g>
    <g stroke="#404040" strokeDasharray="9 5">
      {sessionX.map((x) => <line key={x} x1={x + 0.5} x2={x + 0.5} y1={88} y2={768} />)}
    </g>

    {levels.map(({ price, y, style }) => (
      <line key={price} x1={4} x2={1820} y1={y + 0.5} y2={y + 0.5} stroke={levelStroke[style].stroke} strokeDasharray={levelStroke[style].dash} />
    ))}
    {retracements.map(({ label, y, stroke }) => (
      <line key={label} x1={799} x2={1505} y1={y + 0.5} y2={y + 0.5} stroke={stroke} />
    ))}

    <polyline points={toPolyline(upperBand)} stroke="#0094ff" />
    <polyline points={toPolyline(lowerBand)} stroke="#0094ff" />
    <line x1={4} y1={741} x2={40} y2={748.5} stroke="#0094ff" />
    <polyline points={toPolyline(fastAverage)} stroke="#ff0000" />
    <polyline points={toPolyline(slowAverage)} stroke="#ff6a00" />

    {candles.map(({ kind, x, high, top, bottom, low }) => {
      const height = kind === 'd' ? 2 : Math.max(bottom - top + 1, 3);
      return (
        <g key={x}>
          <rect x={x} y={high} width={1} height={Math.max(low - high, 1)} fill="#6e6e6e" />
          <rect x={x - 2} y={top} width={5} height={height} fill="#6e6e6e" />
          {kind !== 'd' && (
            <rect x={x - 1} y={top + 1} width={3} height={height - 2} fill={kind === 'g' ? '#00ff00' : '#ff0000'} />
          )}
        </g>
      );
    })}

    {/* Trend lines */}
    <g stroke="#d8d800">
      <line x1={799.5} y1={178.5} x2={1521} y2={629} strokeDasharray="10 5.400" />
      <line x1={1565} y1={463} x2={1240} y2={600} strokeDasharray="9.700 4.300" />
    </g>

    {/* Distances between retracement levels */}
    <g stroke="#808080">
      <path d="M1498.500 343v18M1498.500 379v33M1498.500 430v16M1496.500 346l2-3 2 3M1496.500 392l2 3 2-3M1496.500 399l2-3 2 3M1496.500 443l2 3 2-3" />
    </g>

    <g stroke="#707070" strokeDasharray="4 2">
      <line x1={CURSOR_X + 0.5} x2={CURSOR_X + 0.5} y1={88} y2={768} />
      <line x1={4} x2={1820} y1={CURSOR_Y + 0.5} y2={CURSOR_Y + 0.5} />
    </g>
  </svg>
);

const DataWindow = () => (
  <div className="absolute top-10 left-[3px] w-[248px] bg-[rgba(22,66,117,0.45)] ring-1 ring-[#1e4a60] ring-inset">
    <table className="w-full border-collapse text-base leading-5">
      <tbody>
        {dataRows.map(({ name, value, color = 'text-[#d0d0d0]' }, i) =>
          value === undefined ? (
            <tr key={i}>
              <th colSpan={2} className="h-5 p-0 text-center font-bold text-[#d0d0d0]">{name}</th>
            </tr>
          ) : (
            <tr key={i} className={color}>
              <th scope="row" className="h-5 p-0 pl-0.5 text-left font-normal whitespace-nowrap">{name}</th>
              <td className="h-5 p-0 pr-0.5 text-right">{value}</td>
            </tr>
          )
        )}
      </tbody>
    </table>
  </div>
);

const PricePane = () => (
  <div className="relative min-w-0 grow overflow-hidden bg-[#0d0d0d]">
    <PriceChart />
    <div className="relative px-[5px] pt-1.5 text-base leading-[18px] text-[#c8c8c8]">
      <p>* MXN A0-FX, MEXICO PESO - NEW COMPOSITE, 60, 17:00-17:00 (Dynamic)</p>
      <p>Bollinger Bands - MXN A0-FX, 60</p>
      <p>Moving Average - MXN A0-FX, 60</p>
    </div>
    <p className="absolute bottom-px left-1 text-sm leading-[18px] text-[#909090]">© eSignal, 2017</p>

    <div className="font-['DejaVu_Sans_Condensed','Noto_Sans',sans-serif] text-base leading-[18px] whitespace-nowrap">
      {levels.map(({ price, y }) => (
        <span key={price} className={`absolute right-0 -translate-y-1/2 ${BLUE}`} style={{ top: pctY(y - 7) }}>{price}</span>
      ))}
      {retracements.map(({ label, y, text }) => (
        <span key={label} className={`absolute -translate-y-1/2 ${text}`} style={{ left: pctX(1509), top: pctY(y - 7) }}>{label}</span>
      ))}
      <span className="absolute -translate-y-1/2 text-[#808080]" style={{ left: pctX(1469), top: pctY(370) }}>0.06580</span>
      <span className="absolute -translate-y-1/2 text-[#808080]" style={{ left: pctX(1469), top: pctY(421) }}>0.06580</span>
    </div>
    <DataWindow />
  </div>
);

type Tag = { label: string; y: number; className: string };

const AxisTags: React.FC<{ tags: Tag[]; box: typeof PLOT }> = ({ tags, box }) => (
  <>
    {tags.map(({ label, y, className }, i) => (
      <span
        key={i}
        className={`absolute inset-x-0 h-4 -translate-y-1/2 pl-[9px] text-base leading-[17px] [clip-path:polygon(8px_0,100%_0,100%_100%,8px_100%,0_50%)] ${className}`}
        style={{ top: pctY(y, box) }}
      >
        {label}
      </span>
    ))}
  </>
);

const AxisLabel: React.FC<{ label: string; top: string }> = ({ label, top }) => (
  <span className="absolute left-0 flex -translate-y-1/2 items-center text-base leading-[18px] text-[#c8c8c8]" style={{ top }}>
    <i className="h-px w-1 bg-[#555]" />
    {label}
  </span>
);

const PriceAxis = () => (
  <aside className="relative w-24 shrink-0 overflow-hidden border-l border-[#555] bg-black">
    {priceTicks.map((p) => <AxisLabel key={p} label={p.toFixed(5)} top={pctY(priceY(p) + 2)} />)}
    <AxisTags tags={priceTags} box={PLOT} />
  </aside>
);

/* ---------- indicator pane ---------- */

const TabStrip = () => (
  <div className="flex h-7 bg-black">
    <div className="flex grow" role="tablist">
      {tabs.map(({ label, active }) => (
        <div
          key={label}
          className={`relative flex border-r border-r-[#555] pr-4 pl-2 ${active ? 'bg-[#0d0d0d]' : 'border-b border-b-[#555] bg-black'}`}
        >
          <button role="tab" aria-selected={active} className="pt-px text-base whitespace-nowrap text-[#c8c8c8]">{label}</button>
          <button aria-label={`Close ${label}`} className={`absolute top-0 right-1 text-xs leading-3 font-bold ${active ? 'text-[#ddd]' : 'text-[#777]'}`}>x</button>
        </div>
      ))}
      <div className="grow border-b border-[#555]" />
    </div>
    <div className="w-24 shrink-0 border-l border-[#555]" />
  </div>
);

const MacdPane = () => (
  <div className="relative min-w-0 grow overflow-hidden border-b border-[#555] bg-[#0d0d0d]">
    <svg viewBox="4 798 1816 195" preserveAspectRatio="none" className="absolute inset-0 size-full" shapeRendering="crispEdges" fill="none" role="img" aria-label="MACD chart">
      <g stroke="#282828" strokeDasharray="4 2">
        {macdTicks.map(({ y }) => <line key={y} x1={4} x2={1820} y1={y + 0.5} y2={y + 0.5} />)}
        {gridX.map((x) => <line key={x} x1={x + 0.5} x2={x + 0.5} y1={798} y2={993} />)}
      </g>
      {histogram.map(({ x, y }) => (
        <rect key={x} x={x} y={Math.min(y, 913)} width={1} height={Math.max(Math.abs(913 - y), 1)} fill="#ff0073" />
      ))}
      <line x1={4} x2={1820} y1={913.5} y2={913.5} stroke="#707070" strokeDasharray="4 2" />
      <polyline points={toPolyline(macdLine)} stroke="#0094ff" />
      <polyline points={toPolyline(signalLine)} stroke="#ff6a00" />
      <line x1={CURSOR_X + 0.5} x2={CURSOR_X + 0.5} y1={798} y2={993} stroke="#707070" strokeDasharray="4 2" />
    </svg>
    <p className="relative px-[5px] pt-1.5 text-base leading-[18px] text-[#c8c8c8]">* MACD - MXN A0-FX, 60</p>
  </div>
);

const MacdAxis = () => (
  <aside className="relative w-24 shrink-0 overflow-hidden border-l border-[#555] bg-black">
    {macdTicks.map(({ label, y }) => <AxisLabel key={label} label={label} top={pctY(y + 2, MACD)} />)}
    <AxisTags tags={macdTags} box={MACD} />
  </aside>
);

const TimeAxis = () => (
  <footer className="flex h-[22px] bg-black text-base leading-[22px] text-[#d0d0d0]">
    <div className="relative grow">
      <div className="flex items-center gap-[3px] pl-px text-[18px] leading-[22px] font-bold">
        Dyn
        <button aria-label="Time lock" className="flex size-[18px] items-center justify-center border border-[#ccc] bg-[#555]">
          <svg viewBox="0 0 14 14" className="size-3.5" fill="none" stroke="#ddd" strokeWidth="1.300"><path d="M3 7V4q0-3 2.500-3T8 3M2 7h5v6H2z" /><circle cx="10" cy="10" r="3" fill="#ddd" /><path d="M10 8v2h2" stroke="#444" /></svg>
        </button>
      </div>
      {dates.map(({ label, x, bold }) => (
        <span key={label} className={`absolute top-[3px] -translate-x-1/2 ${bold ? 'font-bold' : ''}`} style={{ left: pctX(x) }}>{label}</span>
      ))}
      <span className="absolute top-1 -translate-x-1/2 bg-[#666] px-0.5 leading-[19px] whitespace-nowrap text-white" style={{ left: pctX(CURSOR_X) }}>
        19:00 03/05/2017
      </span>
    </div>
    <div className="w-24 shrink-0" />
  </footer>
);

const App: React.FC = () => (
  <div className="flex h-screen flex-col overflow-hidden bg-black font-['Liberation_Sans',Arial,sans-serif]">
    <TitleBar />
    <div className="flex min-h-0 grow flex-col border-x-4 border-b-4 border-x-[#333] border-b-[#333]">
      <DrawingToolbar />
      <div className="h-[3px] shrink-0 bg-[#4c4c4c]" />
      <main className="flex min-h-0 grow flex-col">
        <section className="flex min-h-0 flex-[680]">
          <PricePane />
          <PriceAxis />
        </section>
        <div className="h-0.5 shrink-0 bg-[#4c4c4c]" />
        <TabStrip />
        <section className="flex min-h-0 flex-[196]">
          <MacdPane />
          <MacdAxis />
        </section>
      </main>
      <TimeAxis />
    </div>
  </div>
);

export default App;
